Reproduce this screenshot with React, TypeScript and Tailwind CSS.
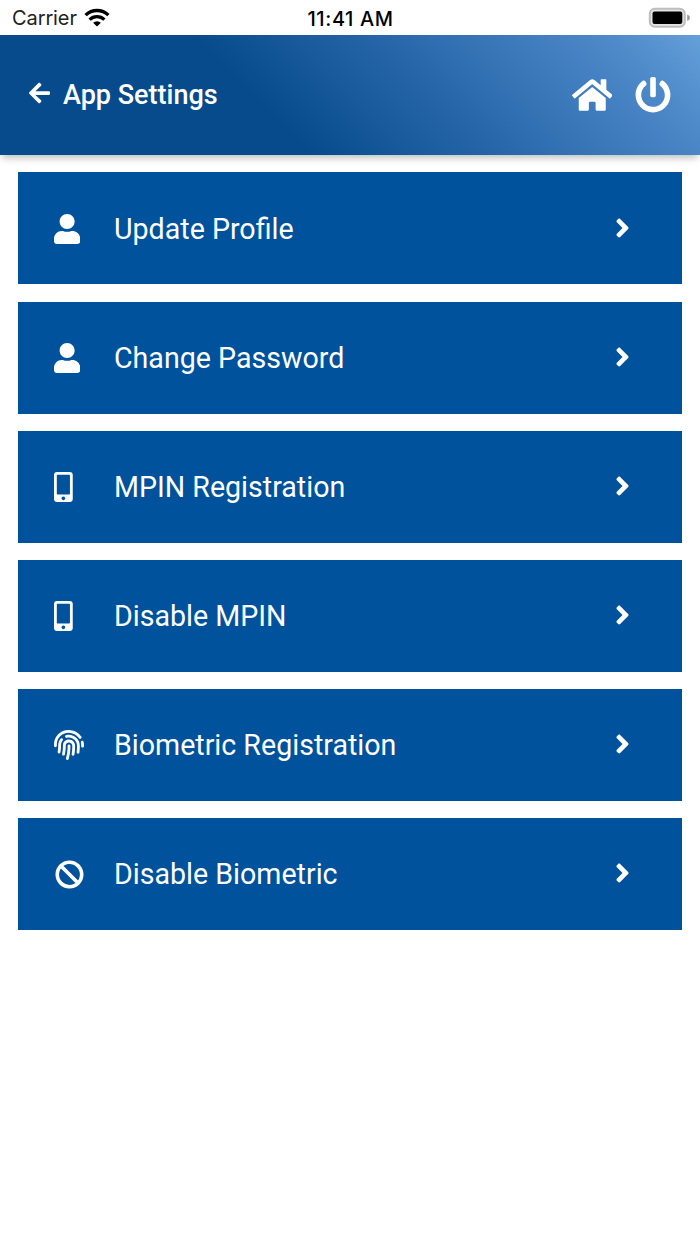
import type { IconType } from "react-icons";
import { FaAngleRight, FaArrowLeft, FaBan, FaFingerprint, FaHome, FaMobileAlt, FaPowerOff, FaUser } from "react-icons/fa";

const items: { label: string; icon: IconType; size: string }[] = [
  { label: "Update Profile", icon: FaUser, size: "h-[30px] w-[26.25px]" },
  { label: "Change Password", icon: FaUser, size: "h-[30px] w-[26.25px]" },
  { label: "MPIN Registration", icon: FaMobileAlt, size: "h-[30px] w-[18.75px]" },
  { label: "Disable MPIN", icon: FaMobileAlt, size: "h-[30px] w-[18.75px]" },
  { label: "Biometric Registration", icon: FaFingerprint, size: "h-[30px] w-[30px]" },
  { label: "Disable Biometric", icon: FaBan, size: "mx-[0.5px] h-[29px] w-[29px]" },
];

function WifiIcon() {
  return (
    <svg viewBox="0 0 26 20" className="h-5 w-[26px]" fill="none" stroke="#000" strokeWidth="3.3">
      <path d="M1.6 7.2 A16.2 16.2 0 0 1 24.4 7.2" />
      <path d="M5.6 11.6 A10.6 10.6 0 0 1 20.4 11.6" />
      <path d="M13 18.6 L9.1 14.8 A5.6 5.6 0 0 1 16.9 14.8 Z" fill="#000" stroke="none" />
    </svg>
  );
}

function BatteryIcon() {
  return (
    <svg viewBox="0 0 44 22" className="h-[22px] w-11">
      <rect x="1.8" y="1.8" width="35" height="18" rx="5" fill="#e4e4e4" stroke="#bdbdbd" strokeWidth="2" />
      <rect x="4.5" y="4.5" width="29.8" height="12.6" rx="2" fill="#000" />
      <path d="M39.2 7.6 Q42 8.6 42 10.8 Q42 13 39.2 14 Z" fill="#999" />
    </svg>
  );
}

function StatusBar() {
  return (
    <div className="grid h-[35px] grid-cols-3 items-center pl-3 pr-2 font-['Inter',sans-serif] text-black">
      <div className="flex items-center gap-[7px] pt-px">
        <span className="text-[20px] leading-none tracking-[-0.1px] text-[#222]">Carrier</span>
        <WifiIcon />
      </div>
      <span className="pr-[3px] pt-0.5 text-center text-[20px] font-medium leading-none tracking-[0.6px]">11:41 AM</span>
      <div className="flex justify-end">
        <BatteryIcon />
      </div>
    </div>
  );
}

function Header() {
  return (
    <header className="flex h-[120px] items-center bg-[linear-gradient(45deg,#074b8d_38%,#2f6eb0_67%,#4f8aca_89%,#64a0d9_100%)] pl-[29px] pr-[29px] text-white shadow-[0_5px_7px_-2px_rgba(0,0,0,0.25)]">
      <FaArrowLeft className="h-6 w-[21px] -translate-y-[2px]" />
      <h1 className="ml-[13px] text-[27px] font-medium leading-none">App Settings</h1>
      <div className="ml-auto flex items-center gap-[23px]">
        <FaHome className="h-9 w-[40.5px]" />
        <FaPowerOff className="h-9 w-9" />
      </div>
    </header>
  );
}

export default function App() {
  return (
    <div className="flex min-h-[1244px] w-[700px] flex-col bg-white font-['Roboto',sans-serif]">
      <StatusBar />
      <Header />
      <main className="flex flex-col gap-[17.1px] px-[18px] pt-[17.45px]">
        {items.map(({ label, icon: Icon, size }) => (
          <button key={label} className="flex h-28 items-center bg-[#00529c] pl-9 pr-[52px] text-white">
            <span className="flex w-[60px] pt-px">
              <Icon className={size} />
            </span>
            <span className="pt-px text-[28.6px] leading-none">{label}</span>
            <FaAngleRight className="mb-px ml-auto h-[30px] w-[15px]" />
          </button>
        ))}
      </main>
    </div>
  );
}
